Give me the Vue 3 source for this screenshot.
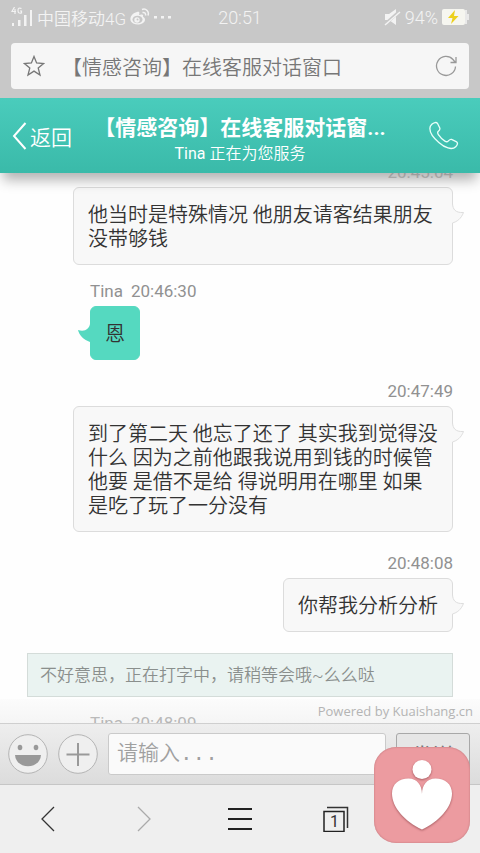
<script setup>
import { ref } from 'vue'

const draft = ref('')
const messages = [
  { id: 1, mine: true, time: '20:45:04', text: '他当时是特殊情况 他朋友请客结果朋友没带够钱' },
  { id: 2, mine: false, name: 'Tina', time: '20:46:30', text: '恩' },
  { id: 3, mine: true, time: '20:47:49', text: '到了第二天 他忘了还了 其实我到觉得没什么 因为之前他跟我说用到钱的时候管他要 是借不是给 得说明用在哪里 如果是吃了玩了一分没有' },
  { id: 4, mine: true, time: '20:48:08', text: '你帮我分析分析' },
]
</script>

<template>
  <div class="screen">
    <div class="browser">
      <div class="status">
        <div class="carrier">
          <svg class="signal" width="22" height="20" viewBox="0 0 22 20" aria-hidden="true">
            <path d="M3.500 0L1 4.500h4M4 2v5M10.500 1.500Q7 0 7 3.500T10.500 6V4H9" fill="none" stroke="#f3f3f3" stroke-width="1.200" />
            <path d="M1 16h2v3H1zM7 13h2.500v6H7zM13 8h2.500v11H13zM19 3h2v16h-2z" fill="#f3f3f3" />
          </svg>
          <span>中国移动4G</span>
          <svg width="20" height="18" viewBox="0 0 20 18" aria-hidden="true">
            <path d="M7 4C2 5-1 10 1 13.500c3 5 14 3.500 14-2 0-2-2-2.500-2-2.500 1-3-2-3-4-2C10 4 9 3.500 7 4z" fill="#f3f3f3" />
            <ellipse cx="7.500" cy="11.500" rx="5" ry="3.800" fill="#c8c8c8" />
            <circle cx="7" cy="12" r="2.700" fill="#f3f3f3" />
            <circle cx="7.500" cy="11.500" r="1" fill="#c8c8c8" />
            <path d="M12 1.500c4-1.500 7.500 2 6 6M12.500 4.500c2-.5 3.500 1 3 3" fill="none" stroke="#f3f3f3" stroke-width="1.500" />
          </svg>
          <svg width="18" height="4" viewBox="0 0 18 4" aria-hidden="true">
            <path d="M0 1h3v2.500H0zM7 1h3v2.500H7zM14 1h3v2.500h-3z" fill="#f3f3f3" />
          </svg>
        </div>
        <span class="clock">20:51</span>
        <div class="power">
          <svg width="17" height="17" viewBox="0 0 17 17" aria-hidden="true">
            <path d="M1 5h4l7-5v16l-7-5H1z" fill="#f3f3f3" />
            <path d="M0 16L16 2" stroke="#c8c8c8" stroke-width="3" />
            <path d="M1 16L16 3" stroke="#f3f3f3" stroke-width="1.500" />
          </svg>
          <span>94%</span>
          <svg width="27" height="16" viewBox="0 0 27 16" aria-hidden="true">
            <rect x="0" y="0" width="23" height="16" rx="2" fill="#f6f6f0" />
            <path d="M24 1v14M26 5v6" stroke="#f3f3f3" stroke-width="1.500" />
            <path d="M13 1L6 9h4.500L9 15l7.500-8H12z" fill="#ecd01c" />
          </svg>
        </div>
      </div>
      <div class="address">
        <button class="plain" aria-label="收藏">
          <svg width="22" height="22" viewBox="0 0 22 22">
            <path d="M11 1.500l2.600 6.500 7 .5-5.400 4.500 1.800 7-6-3.900-6 3.900 1.800-7L1.400 8.500l7-.5z" fill="none" stroke="#777" stroke-width="1.300" />
          </svg>
        </button>
        <span class="page-title">【情感咨询】在线客服对话窗口</span>
        <button class="plain" aria-label="刷新">
          <svg width="22" height="22" viewBox="0 0 22 22">
            <path d="M20.500 11.500A9.500 9.500 0 1 1 18 4.500L20 7M21 2v5.500h-5.500" fill="none" stroke="#999" stroke-width="1.300" />
          </svg>
        </button>
      </div>
    </div>

    <header class="header">
      <button class="plain back">
        <svg width="16" height="28" viewBox="0 0 16 28" aria-hidden="true">
          <path d="M14.500 1L3 14l11.500 13" fill="none" stroke="#fff" stroke-width="2" />
        </svg>
        <span>返回</span>
      </button>
      <div class="heading">
        <h1>【情感咨询】在线客服对话窗...</h1>
        <p><span class="agent-name">Tina</span> 正在为您服务</p>
      </div>
      <button class="plain call" aria-label="电话">
        <svg width="30" height="29" viewBox="0 0 32 30">
          <path d="M3 3C5 1 8 .5 9 2l2.500 5c.6 1.500-.3 2.500-1.500 3.500-1.200 1-1 2 0 3.500 2 3 4 5 7 7 1.500 1 2.500 1 3.500 0s2-2.500 3.500-1.800l5 2.300c2.500 1.200 1 4-.5 5.500-4 4-12 1-18-4.500C4 17 .5 12 1 7c.1-1.700.8-2.800 2-4z" fill="none" stroke="#e9fffa" stroke-width="1.400" />
        </svg>
      </button>
    </header>

    <main class="chat">
      <div class="list">
        <div v-for="m in messages" :key="m.id" class="message" :class="m.mine ? 'mine' : 'agent'">
          <div class="meta"><span v-if="m.name">{{ m.name }}</span><time>{{ m.time }}</time></div>
          <div class="bubble">
            {{ m.text }}
            <svg v-if="m.mine" class="tail" width="14" height="22" viewBox="0 0 14 22" aria-hidden="true">
              <path d="M0 1h1.500C2 6 4 10 12.500 9.500 10 16 6 18.500 1.500 20H0z" fill="#f8f8f8" />
              <path d="M1.500 1C2 6 4 10 12.500 9.500 10 16 6 18.500 1.500 20" fill="none" stroke="#dedede" />
            </svg>
            <svg v-else class="tail" width="14" height="22" viewBox="0 0 14 22" aria-hidden="true">
              <path d="M14 2h-1C12 7 8 10 1 8c1 5 6 10 12 12h1z" fill="#55d9c0" />
            </svg>
          </div>
        </div>
        <p class="notice">不好意思，正在打字中，请稍等会哦~么么哒</p>
        <div class="message agent">
          <div class="meta"><span>Tina</span><time>20:48:09</time></div>
        </div>
      </div>
      <div class="powered">Powered by Kuaishang.cn</div>
    </main>

    <form class="composer" @submit.prevent>
      <button type="button" class="plain" aria-label="表情">
        <svg width="40" height="40" viewBox="0 0 40 40">
          <circle cx="20" cy="20" r="19.300" fill="#efefef" stroke="#b4b4b4" />
          <ellipse cx="12" cy="13.500" rx="2.300" ry="2.800" fill="#999" />
          <ellipse cx="28" cy="13.500" rx="2.300" ry="2.800" fill="#999" />
          <path d="M7 21h26c-1 15-25 15-26 0z" fill="#999" />
        </svg>
      </button>
      <button type="button" class="plain" aria-label="更多">
        <svg width="40" height="40" viewBox="0 0 40 40">
          <circle cx="20" cy="20" r="19.300" fill="#efefef" stroke="#b4b4b4" />
          <path d="M8.500 20.500h23M20 9v23" stroke="#999" stroke-width="2" />
        </svg>
      </button>
      <input v-model="draft" class="field" type="text" placeholder="请输入..." aria-label="消息" />
      <button type="submit" class="send">发送</button>
    </form>

    <nav class="toolbar">
      <button class="plain" aria-label="后退">
        <svg width="16" height="26" viewBox="0 0 16 26"><path d="M14 1L2 13l12 12" fill="none" stroke="#333" stroke-width="1.300" /></svg>
      </button>
      <button class="plain" aria-label="前进">
        <svg width="16" height="26" viewBox="0 0 16 26"><path d="M2 1l12 12L2 25" fill="none" stroke="#aaa" stroke-width="1.300" /></svg>
      </button>
      <button class="plain" aria-label="菜单">
        <svg width="24" height="24" viewBox="0 0 24 24"><path d="M0 2h24M0 12h24M0 22h24" stroke="#222" stroke-width="2" /></svg>
      </button>
      <button class="plain tabs" aria-label="标签页">
        <svg width="26" height="26" viewBox="0 0 26 26">
          <path d="M4 1.500h20.500V22" fill="none" stroke="#333" stroke-width="1.500" />
          <rect x="1" y="5.500" width="20" height="20" fill="none" stroke="#222" stroke-width="1.500" />
        </svg>
        <span class="count">1</span>
      </button>
    </nav>

    <div class="badge">
      <svg viewBox="0 0 96 96" aria-hidden="true">
        <g class="mark">
          <circle cx="48" cy="22.500" r="9.500" />
          <path d="M48 47C48 38 43 31.500 34.500 31.500 25 31.500 18 37 18 46.500c0 14 13 28 30 36C65 74.500 78 60.500 78 46.500c0-9.500-7-15-16.500-15C53 31.500 48 38 48 47z" />
        </g>
      </svg>
    </div>
  </div>
</template>

<style>
body {
  margin: 0;
}
</style>

<style scoped>
.screen {
  position: relative;
  display: flex;
  flex-direction: column;
  height: 100vh;
  overflow: hidden;
  background: #fefefe;
  color: #333;
  font-family: Roboto, "Noto Sans CJK SC", sans-serif;
  font-weight: 350;
}

.plain {
  display: flex;
  align-items: center;
  justify-content: center;
  padding: 0;
  border: 0;
  background: none;
  color: inherit;
  font: inherit;
}

.browser {
  padding: 0 11px 9px;
  background: #c8c8c8;
}

.status {
  display: grid;
  grid-template-columns: 1fr auto 1fr;
  align-items: center;
  height: 34px;
  margin-bottom: 9px;
  color: #f3f3f3;
  font-size: 17px;
}

.carrier,
.power {
  display: flex;
  align-items: center;
  gap: 4px;
}

.power {
  justify-content: flex-end;
}

.power span,
.clock {
  font-size: 18px;
}

.address {
  display: flex;
  align-items: center;
  height: 46px;
  padding: 0 12px;
  border-radius: 4px;
  background: #f6f6f6;
}

.page-title {
  flex: 1;
  margin-left: 17px;
  color: #777;
  font-size: 20px;
}

.header {
  position: relative;
  z-index: 1;
  display: grid;
  grid-template-columns: 72px 1fr 72px;
  align-items: center;
  height: 75px;
  background: linear-gradient(#4accbc, #3abaa9);
  box-shadow: 0 10px 12px -3px rgba(0, 0, 0, 0.3);
  color: #fff;
}

.back {
  gap: 3px;
  justify-content: flex-end;
  font-size: 21px;
  white-space: nowrap;
}

.heading {
  padding-top: 8px;
  text-align: center;
  white-space: nowrap;
}

.heading h1 {
  margin: 0;
  font-size: 21px;
  font-weight: 700;
  line-height: 28px;
}

.heading p {
  margin: 0;
  font-size: 16px;
  line-height: 24px;
}

.agent-name {
  font-weight: 400;
}

.chat {
  position: relative;
  flex: 1;
  min-height: 0;
  overflow: hidden;
}

.list {
  display: flex;
  flex-direction: column;
  gap: 16px;
  margin-top: -16px;
  padding: 0 27px;
}

.message {
  display: flex;
  flex-direction: column;
}

.mine {
  align-items: flex-end;
  margin-left: 46px;
}

.agent {
  align-items: flex-start;
  margin-top: -5px;
  margin-left: 63px;
}

.meta {
  display: flex;
  gap: 8px;
  color: #919191;
  font-size: 17px;
  font-weight: 400;
  line-height: 30px;
}

.message:first-child .meta {
  color: #d0d0d0;
}

.bubble {
  position: relative;
  box-sizing: border-box;
  padding: 15px 14px 13px;
  border: 1px solid #dcdcdc;
  border-radius: 6px;
  background: #f8f8f8;
  font-size: 20px;
  line-height: 24px;
}

.agent .bubble {
  border-color: #55d9c0;
  background: #55d9c0;
}

.tail {
  position: absolute;
  top: 15px;
  right: -13px;
}

.agent .tail {
  right: auto;
  left: -14px;
}

.notice {
  margin: 5px 0 0;
  padding: 9px 12px;
  border: 1px solid #d4dcd9;
  background: #eaf3f1;
  color: #8a8f8d;
  font-size: 17px;
  line-height: 24px;
}

.powered {
  position: absolute;
  right: 0;
  bottom: 0;
  left: 0;
  padding-right: 7px;
  background: linear-gradient(rgba(250, 250, 250, 0.6), rgba(232, 232, 232, 0.4));
  color: #b4b4b4;
  font-family: "Open Sans", sans-serif;
  font-size: 13px;
  font-weight: 400;
  line-height: 24px;
  text-align: right;
}

.composer {
  display: flex;
  align-items: center;
  gap: 10px;
  box-sizing: border-box;
  height: 62px;
  padding: 0 10px 0 8px;
  border-top: 1px solid #cfcfcf;
  border-bottom: 1px solid #c6c6c6;
  background: linear-gradient(#eeeeee, #dcdcdc);
}

.field,
.send {
  box-sizing: border-box;
  height: 42px;
  border-radius: 3px;
}

.field {
  flex: 1;
  min-width: 0;
  padding: 0 8px;
  border: 1px solid #cacaca;
  background: #fafafa;
  color: #333;
  font-family: "Liberation Mono", "Noto Sans CJK SC", monospace;
  font-size: 21px;
  font-weight: 350;
}

.field::placeholder {
  color: #a0a0a0;
  opacity: 1;
}

.send {
  width: 74px;
  padding: 0;
  border: 1px solid #a8a8a8;
  background: #e6e6e6;
  color: #777;
  font-family: inherit;
  font-size: 21px;
}

.toolbar {
  display: grid;
  grid-template-columns: repeat(5, 1fr);
  height: 68px;
  background: #efefef;
}

.tabs {
  position: relative;
}

.count {
  position: absolute;
  padding: 5px 3px 0 0;
  font-size: 16px;
  font-weight: 400;
}

.badge {
  position: absolute;
  right: 10px;
  bottom: 10px;
  width: 96px;
  height: 96px;
  border-radius: 22px;
  background: #ec9ba0;
  box-shadow: inset 0 0 2px #b66e73;
}

.mark {
  fill: #fff;
  filter: drop-shadow(0 1px 1px rgba(120, 50, 55, 0.6));
}
</style>
